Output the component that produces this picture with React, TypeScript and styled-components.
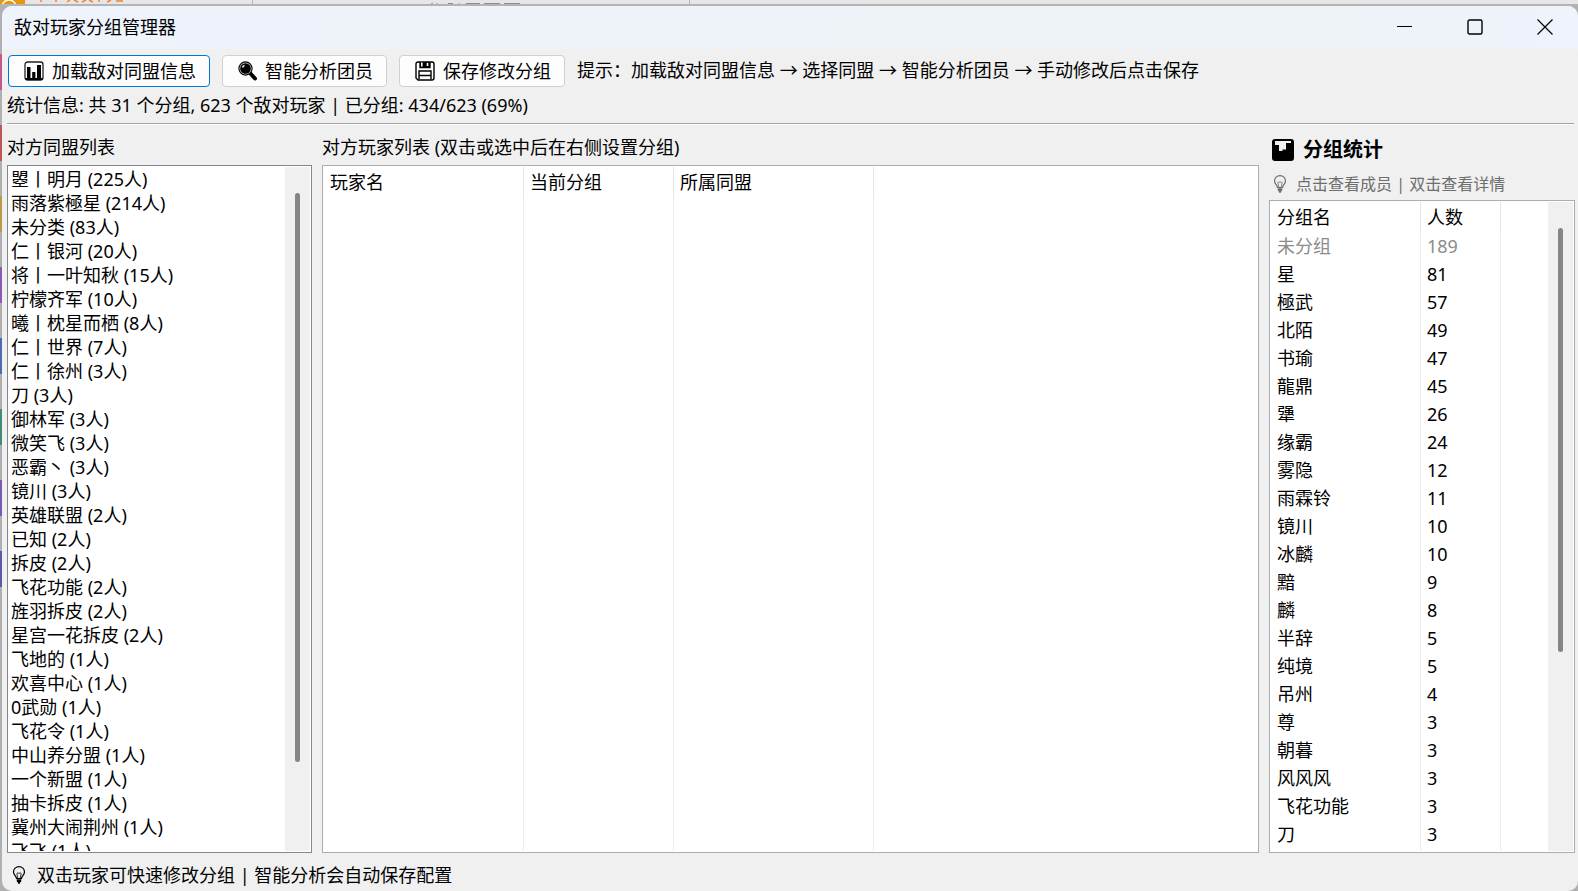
import React from 'react';
import styled, { createGlobalStyle, css } from 'styled-components';

const GlobalStyle = createGlobalStyle`
  * { box-sizing: border-box; }
  html, body, #root { height: 100%; }
  body {
    margin: 0;
    overflow: hidden;
    background: #b0b0b0;
    color: #000;
    font: 18px/24px 'Noto Sans', 'Noto Sans CJK SC', sans-serif;
  }
`;

const Desktop = styled.div`
  display: flex;
  flex-direction: column;
  height: 100%;
`;

const BackgroundApp = styled.div`
  display: flex;
  align-items: flex-start;
  flex: none;
  height: 6px;
  overflow: hidden;
  background: #e6e6e6;
  border-bottom: 2px solid #b4b4b4;
`;

const AppLogo = styled.svg`
  flex: none;
  width: 25px;
  height: 20px;
`;

const BackgroundColumn = styled.div<{ $width: number }>`
  display: flex;
  flex: none;
  width: ${(p) => p.$width}px;
  height: 4px;
  border-right: 1px solid #b4b4b4;
`;

const BackgroundBody = styled.div`
  display: flex;
  flex: 1;
  min-height: 0;
`;

const Strip = styled.div`
  flex: none;
  width: 2px;
`;

const StripBlock = styled.div<{ $color: string; $size: number }>`
  height: ${(p) => p.$size}px;
  background: ${(p) => p.$color};
`;

const Window = styled.main`
  display: flex;
  flex: 1;
  flex-direction: column;
  min-width: 0;
  overflow: hidden;
  background: #f0f0f0;
  border-radius: 10px;
`;

const TitleBar = styled.header`
  display: flex;
  flex: none;
  align-items: center;
  height: 43px;
  padding: 0 0 2px 12px;
  background: linear-gradient(90deg, #eef3fc, #eef3f8 60%, #eef3f8 85%, #eef3fc);
`;

const Title = styled.h1`
  flex: 1;
  margin: 0;
  font-size: 18px;
  font-weight: 400;
`;

const CaptionButton = styled.button`
  display: grid;
  place-items: center;
  width: 70px;
  height: 40px;
  padding: 0;
  border: 0;
  background: none;

  &:last-child { margin-right: -2px; }
`;

const Toolbar = styled.div`
  display: flex;
  flex: none;
  align-items: center;
  gap: 12px;
  height: 44px;
  padding: 0 6px;
`;

const ToolButton = styled.button<{ $primary?: boolean }>`
  display: flex;
  align-items: center;
  gap: 8px;
  height: 32px;
  padding: 0 13px 0 15px;
  border: 1px solid ${(p) => (p.$primary ? '#0078d4' : '#d0d0d0')};
  border-radius: 4px;
  background: #fdfdfd;
  color: inherit;
  font: inherit;
  white-space: nowrap;
`;

const Hint = styled.span`
  padding-bottom: 2px;
  white-space: nowrap;
`;

const Summary = styled.p`
  flex: none;
  margin: 0 4px 0 5px;
  padding-bottom: 6px;
  border-bottom: 1px solid #a0a0a0;
  box-shadow: 0 1px #fff;
`;

const Panels = styled.div`
  display: flex;
  flex: 1;
  gap: 10px;
  min-height: 0;
  padding: 11px 3px 0 5px;
`;

const Panel = styled.section<{ $width?: number }>`
  display: flex;
  flex-direction: column;
  min-height: 0;
  ${(p) => (p.$width ? css`flex: none; width: ${p.$width}px;` : css`flex: 1; min-width: 0;`)}
`;

const PanelTitle = styled.h2`
  margin: 0 0 6px;
  font-size: 18px;
  font-weight: 400;
`;

const StatsTitle = styled.h2`
  display: flex;
  align-items: center;
  gap: 9px;
  margin: 3px 0 0 3px;
  font-size: 20px;
  font-weight: 700;
`;

const StatsHint = styled.p`
  display: flex;
  align-items: center;
  gap: 9px;
  margin: 10px 0 4px 4px;
  color: #6e6e6e;
  font-size: 16px;
`;

const Frame = styled.div<{ $dark?: boolean }>`
  display: flex;
  flex: 1;
  min-height: 0;
  padding: 1px;
  border: 1px solid ${(p) => (p.$dark ? '#828790' : '#abadb3')};
  background: #fff;
  overflow: hidden;
`;

const AllianceItems = styled.ul`
  flex: 1;
  margin: 0;
  padding: 0 2px;
  list-style: none;
  white-space: nowrap;
  overflow: hidden;
`;

const ScrollTrack = styled.div<{ $thumb: number }>`
  flex: none;
  width: 25px;
  padding: 26px 0 26px 10px;
  background: #f0f0f0;

  &::before {
    content: '';
    display: block;
    width: 5px;
    height: ${(p) => p.$thumb}%;
    border-radius: 3px;
    background: #858585;
  }
`;

const Grid = styled.table<{ $row: number }>`
  flex: 1;
  height: 100%;
  min-width: 0;
  border-collapse: separate;
  border-spacing: 0;
  table-layout: fixed;

  th, td {
    height: ${(p) => p.$row}px;
    padding: 0 0 0 6px;
    font-weight: 400;
    text-align: left;
    white-space: nowrap;
    border-right: 1px solid #e5effc;
  }
  th { height: 30px; border-color: #e5e5e5; }
  th:last-child, td:last-child { border-right: 0; }
`;

const Row = styled.tr<{ $muted?: boolean }>`
  color: ${(p) => (p.$muted ? '#8c8c8c' : 'inherit')};
`;

const Filler = styled.tr`
  && td { height: auto; }
`;

const StatusBar = styled.footer`
  display: flex;
  flex: none;
  align-items: center;
  gap: 11px;
  height: 38px;
  padding: 6px 10px 0;
`;

const alliances: [string, number][] = [
  ['曌丨明月', 225], ['雨落紫極星', 214], ['未分类', 83], ['仁丨银河', 20], ['将丨一叶知秋', 15],
  ['柠檬齐军', 10], ['曦丨枕星而栖', 8], ['仁丨世界', 7], ['仁丨徐州', 3], ['刀', 3],
  ['御林军', 3], ['微笑飞', 3], ['恶霸丶', 3], ['镜川', 3], ['英雄联盟', 2], ['已知', 2],
  ['拆皮', 2], ['飞花功能', 2], ['旌羽拆皮', 2], ['星宫一花拆皮', 2], ['飞地的', 1],
  ['欢喜中心', 1], ['0武勋', 1], ['飞花令', 1], ['中山养分盟', 1], ['一个新盟', 1],
  ['抽卡拆皮', 1], ['冀州大闹荆州', 1], ['飞飞', 1],
];

const groups: [string, number][] = [
  ['未分组', 189], ['星', 81], ['極武', 57], ['北陌', 49], ['书瑜', 47], ['龍鼎', 45],
  ['犟', 26], ['缘霸', 24], ['雾隐', 12], ['雨霖铃', 11], ['镜川', 10], ['冰麟', 10],
  ['黯', 9], ['麟', 8], ['半辞', 5], ['纯境', 5], ['吊州', 4], ['尊', 3], ['朝暮', 3],
  ['风风风', 3], ['飞花功能', 3], ['刀', 3],
];

const strip: [string, number][] = [
  ['#b0b0b0', 48], ['#c05a8c', 36], ['#b0b0b0', 35], ['#c05555', 36], ['#b0b0b0', 35],
  ['#b89a48', 36], ['#b0b0b0', 35], ['#8a5ab0', 36], ['#b0b0b0', 35], ['#4a6eb0', 36],
  ['#b0b0b0', 35], ['#3f8c70', 36], ['#b0b0b0', 35], ['#7a5ab0', 36], ['#b0b0b0', 35],
  ['#5a5aa8', 36],
];

const ChartIcon = () => (
  <svg width="20" height="20" viewBox="0 0 20 20" aria-hidden="true">
    <rect x="1" y="1" width="18" height="18" rx="2.5" fill="#fff" stroke="#222" strokeWidth="1.3" />
    <path d="M3 6h3.500v12H3zM8.200 11h3.200v7H8.200zM13 4h4v14h-4z" />
    <path d="M1.500 18h17" stroke="#000" strokeWidth="2" />
  </svg>
);

const BoldChartIcon = () => (
  <svg width="22" height="22" viewBox="0 0 22 22" aria-hidden="true">
    <rect width="22" height="22" rx="3" />
    <path d="M3 2h16v2h-5v6.500h-3.500V12H7V6H3z" fill="#f0f0f0" />
  </svg>
);

const MagnifierIcon = () => (
  <svg width="19" height="20" viewBox="0 0 19 20" aria-hidden="true">
    <path d="M12 12l5 5.500" stroke="#000" strokeWidth="4" strokeLinecap="round" />
    <circle cx="7.500" cy="7.500" r="6.600" stroke="#000" strokeWidth="1.100" fill="#ccc" />
    <circle cx="7.500" cy="7.500" r="5.300" />
    <path d="M4.500 6.500a3 3 0 0 1 2-2" fill="none" stroke="#fff" strokeWidth="1.400" />
  </svg>
);

const FloppyIcon = () => (
  <svg width="20" height="20" viewBox="0 0 20 20" fill="none" stroke="#000" strokeWidth="1.400" aria-hidden="true">
    <path d="M3 1h14a2 2 0 0 1 2 2v14a2 2 0 0 1-2 2H3l-2-2V3a2 2 0 0 1 2-2z" fill="#fff" />
    <path d="M5 1v5.500h10V1" fill="#000" />
    <path d="M6.800 1.500v4M12.500 2v3" stroke="#fff" strokeWidth="1.600" />
    <path d="M4 18.500V10h12v8.500M4 14.500h12" />
  </svg>
);

const BulbIcon = ({ color = '#000' }: { color?: string }) => (
  <svg width="14" height="18" viewBox="0 0 14 18" fill="none" stroke={color} aria-hidden="true">
    <path d="M4.500 12.500C4.500 10 1.500 9 1.500 5.900a5.500 5.300 0 0 1 11 0C12.500 9 9.500 10 9.500 12.500z" strokeWidth="1.200" />
    <path d="M5.800 12L4.800 7.500q1.100-1.500 2.200 0q1.100-1.500 2.200 0L8.200 12" strokeWidth=".8" />
    <path d="M4.700 14h4.600M4.900 15.500h4.200M6 17h2" strokeWidth="1.400" />
  </svg>
);

const BackgroundMarks = () => (
  <svg width="100" height="4" viewBox="0 0 100 4" fill="none" stroke="#f08232" strokeWidth="1.500" aria-hidden="true">
    <path d="M2 0v2M17 0v2M28 2l3-2M35 0l4 2M43 2l4-2M50 0l4 2M60 0v2M68 2l4-2M77 1h7" transform="translate(14)" />
  </svg>
);

const BackgroundHeading = () => (
  <svg width="270" height="4" viewBox="0 0 270 4" fill="none" stroke="#8a8f94" aria-hidden="true">
    <path d="M178 4l2-1M184 3v1M195 3.500h5M206 3v1M213 4v-.5h14M231 3.500h16M251 3.500h16" />
  </svg>
);

export default function App() {
  return (
    <>
      <GlobalStyle />
      <Desktop>
        <BackgroundApp aria-hidden="true">
          <AppLogo viewBox="0 0 25 20">
            <path fill="#e8960e" d="M0 0h25v20H0z" />
            <circle cx="9" cy="7" r="7" fill="none" stroke="#fff" strokeWidth="1.500" />
          </AppLogo>
          <BackgroundColumn $width={228}><BackgroundMarks /></BackgroundColumn>
          <BackgroundColumn $width={437}><BackgroundHeading /></BackgroundColumn>
        </BackgroundApp>
        <BackgroundBody>
          <Strip aria-hidden="true">
            {strip.map(([color, size], i) => <StripBlock key={i} $color={color} $size={size} />)}
          </Strip>
          <Window>
            <TitleBar>
              <Title>敌对玩家分组管理器</Title>
              <CaptionButton aria-label="最小化">
                <svg width="16" height="16" stroke="#000"><path d="M0 7.500h15" /></svg>
              </CaptionButton>
              <CaptionButton aria-label="最大化">
                <svg width="16" height="16" fill="none" stroke="#000" strokeWidth="1.400"><rect x="1" y="1" width="14" height="14" rx="1.500" /></svg>
              </CaptionButton>
              <CaptionButton aria-label="关闭">
                <svg width="16" height="16" stroke="#000" strokeWidth="1.200"><path d="M.5.5l15 15M15.500.5l-15 15" /></svg>
              </CaptionButton>
            </TitleBar>
            <Toolbar>
              <ToolButton $primary><ChartIcon />加载敌对同盟信息</ToolButton>
              <ToolButton><MagnifierIcon />智能分析团员</ToolButton>
              <ToolButton><FloppyIcon />保存修改分组</ToolButton>
              <Hint>提示：加载敌对同盟信息 → 选择同盟 → 智能分析团员 → 手动修改后点击保存</Hint>
            </Toolbar>
            <Summary>统计信息: 共 31 个分组, 623 个敌对玩家 | 已分组: 434/623 (69%)</Summary>
            <Panels>
              <Panel $width={305}>
                <PanelTitle>对方同盟列表</PanelTitle>
                <Frame $dark>
                  <AllianceItems>
                    {alliances.map(([name, count]) => <li key={name}>{name} ({count}人)</li>)}
                  </AllianceItems>
                  <ScrollTrack $thumb={90} />
                </Frame>
              </Panel>
              <Panel>
                <PanelTitle>对方玩家列表 (双击或选中后在右侧设置分组)</PanelTitle>
                <Frame>
                  <Grid $row={28}>
                    <colgroup><col width="200" /><col width="150" /><col width="200" /><col /></colgroup>
                    <thead><tr><th>玩家名</th><th>当前分组</th><th>所属同盟</th><th /></tr></thead>
                    <tbody><Filler><td /><td /><td /><td /></Filler></tbody>
                  </Grid>
                </Frame>
              </Panel>
              <Panel $width={306}>
                <StatsTitle><BoldChartIcon />分组统计</StatsTitle>
                <StatsHint><BulbIcon color="#6e6e6e" />点击查看成员 | 双击查看详情</StatsHint>
                <Frame>
                  <Grid $row={28}>
                    <colgroup><col width="150" /><col width="80" /><col /></colgroup>
                    <thead><tr><th>分组名</th><th>人数</th><th /></tr></thead>
                    <tbody>
                      {groups.map(([name, count]) => (
                        <Row key={name} $muted={name === '未分组'}><td>{name}</td><td>{count}</td><td /></Row>
                      ))}
                      <Filler><td /><td /><td /></Filler>
                    </tbody>
                  </Grid>
                  <ScrollTrack $thumb={71} />
                </Frame>
              </Panel>
            </Panels>
            <StatusBar><BulbIcon />双击玩家可快速修改分组 | 智能分析会自动保存配置</StatusBar>
          </Window>
        </BackgroundBody>
      </Desktop>
    </>
  );
}
